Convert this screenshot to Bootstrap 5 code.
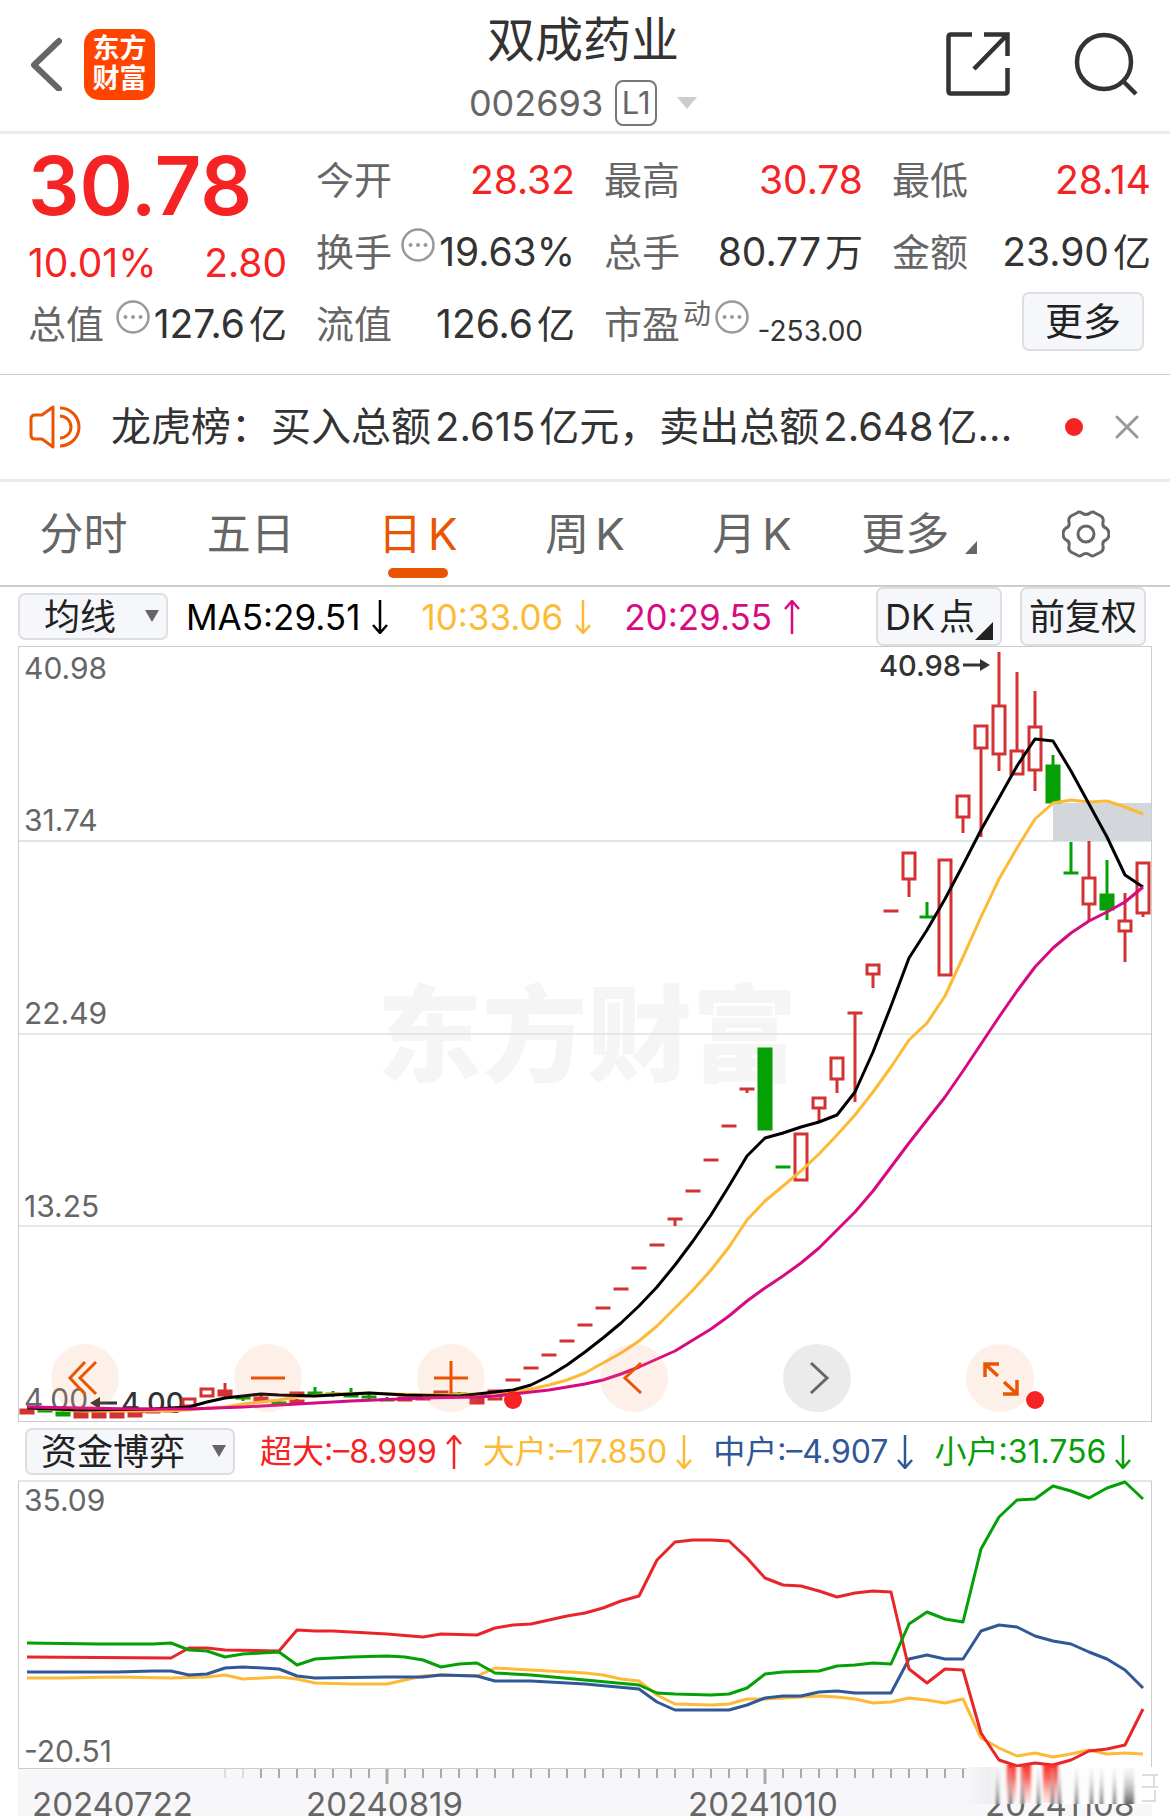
<!DOCTYPE html>
<html lang="zh-CN">
<head>
<meta charset="utf-8">
<meta name="viewport" content="width=device-width, initial-scale=1">
<title>双成药业 002693</title>
<link href="https://cdn.jsdelivr.net/npm/bootstrap@5.3.0/dist/css/bootstrap.min.css" rel="stylesheet">
<style>
body{font-family:Inter,"Noto Sans CJK SC",sans-serif;color:#333;background:#fff;overflow-x:hidden}
button{font-family:inherit}
svg{display:block;flex:none}
.cj{margin-left:4px}
.up-red{color:#f52323}
.topbar{height:134px;border-bottom:3px solid #ebebeb;padding:0 32px 0 28px}
.side{flex:1 1 0;padding-bottom:3px}
.logo-tile{width:71px;height:71px;border-radius:15px;background:#ff4400;color:#fff;font-size:27px;line-height:30px;font-weight:700;margin-left:22px}
.title-block{padding-top:6px}
.stock-name{font-size:48px;line-height:56px;font-weight:400;margin:0 0 12px}
.stock-code{font-size:36px;line-height:44px;color:#666;gap:12px}
.level-tag{border:2px solid #777;border-radius:8px;font-size:31px;line-height:42px;width:42px;text-align:center}
.quote{padding:10px 19px 14px 28px;gap:29px;border-bottom:1px solid #ccc;font-size:39px}
.quote-col{flex:1 1 0;min-width:0}
.pair{height:72px;white-space:nowrap}
.pair dt{font-weight:400;font-size:38px;color:#666}
.pair dd{margin:0}
.pair dd .cj{font-size:38px}
.big-price{font-size:81px;line-height:84px;font-weight:600}
.change{height:60px;padding-top:10px;font-size:39px}
.pe-sup{font-size:28px;margin:0 4px 20px 3px}
.pair .pe-val{font-size:28px;padding-top:14px}
.info-ring{margin-bottom:14px}
.flat-btn{background:#f6f7fa;border:2px solid #dcdee2;border-radius:7px;color:#222;padding:0;font-size:36px;line-height:42px}
.more-btn{width:122px;height:59px;font-size:38px;margin:0 7px 6px 0}
.newsbar{height:107px;border-bottom:3px solid #ebebeb;padding:0 31px 0 29px;font-size:40px}
.newsbar a{color:#333;margin-left:30px;text-decoration:none;white-space:nowrap}
.news-dot{width:18px;height:18px;border-radius:50%;background:#f52323;margin-right:32px}
.periods{height:105px;border-bottom:2px solid #ccc}
.periods a,.periods button{flex:1 1 0;height:103px;font-size:44px;color:#666;text-decoration:none;position:relative;background:none;border:0;padding:0;white-space:nowrap}
.periods a.active{color:#ea5504}
.periods a.active::after{content:"";position:absolute;left:50%;bottom:7px;width:60px;height:10px;margin-left:-30px;border-radius:5px;background:#ea5504}
.k-gap{margin-left:6px}
.legend-row{height:59px;padding:0 24px 0 18px;white-space:nowrap}
.legend-ma{font-size:35px;line-height:40px}
.legend-ma .trend{margin-left:12px}
.legend-ma .ma-item{margin-left:33px}
.legend-ma .picker+.ma-item{margin-left:18px}
.legend-fund{font-size:32px;line-height:40px;gap:21px;padding-left:25px}
.legend-fund .trend{margin-left:9px}
.picker{position:relative}
.picker select{appearance:none;background:#f6f7fa;border:2px solid #dcdee2;border-radius:7px;height:47px;line-height:42px;font-size:36px;color:#222;padding:0 0 0 24px;width:150px;font-family:inherit}
.picker.fund{margin-right:4px}
.picker.fund select{width:210px;padding-left:14px}
.picker::after{content:"";position:absolute;right:9px;top:17px;border:7px solid transparent;border-top:12px solid #666;border-bottom:0;pointer-events:none}
.tool-btn{height:59px;width:126px}
.tool-btn+.tool-btn{margin-left:18px}
.dk{position:relative;padding-right:18px}
.dk::after{content:"";position:absolute;right:7px;bottom:4px;border-left:18px solid transparent;border-bottom:18px solid #222}
.plot{margin:0 18px;position:relative}
.plot>svg{width:100%;height:auto;overflow:visible}
.plot text{font-family:Inter,"Noto Sans CJK SC",sans-serif}
.chart-tools{position:absolute;left:33px;right:118px;bottom:10px}
.chart-tools button{width:68px;height:68px;border:0;border-radius:50%;padding:0;background:rgba(242,142,88,.13)}
.chart-tools button.off{background:#ebebeb}
</style>
<script src="https://cdn.jsdelivr.net/npm/bootstrap@5.3.0/dist/js/bootstrap.bundle.min.js"></script>
</head>
<body>
<header class="topbar d-flex align-items-center">
  <div class="side d-flex align-items-center">
    <a href="#" aria-label="返回"><svg width="34" height="54" viewBox="0 0 34 54" fill="none" stroke="#666" stroke-width="6" stroke-linecap="round" stroke-linejoin="round"><path d="M31 4 6 28 31 52"/></svg></a>
    <div class="logo-tile d-flex flex-column align-items-center justify-content-center"><span>东方</span><span>财富</span></div>
  </div>
  <div class="title-block text-center">
    <h1 class="stock-name">双成药业</h1>
    <div class="stock-code d-flex align-items-center">002693<span class="level-tag">L1</span><svg width="20" height="12" viewBox="0 0 20 12" class="ms-2"><path d="M0 0H20L10 12Z" fill="#ccc"/></svg></div>
  </div>
  <div class="side d-flex align-items-center justify-content-end gap-5">
    <a href="#" aria-label="分享" class="me-3"><svg width="64" height="64" viewBox="0 0 64 64" fill="none" stroke="#333" stroke-width="4.5"><path d="M26 2.500H5Q2.500 2.500 2.500 5V59Q2.500 61.500 5 61.500H59Q61.500 61.500 61.500 59V36M38 2.500H61.500V24M61 3 28 37"/></svg></a>
    <a href="#" aria-label="搜索"><svg width="64" height="64" viewBox="0 0 64 64" fill="none" stroke="#333" stroke-width="4.500"><circle cx="30" cy="30" r="27"/><path d="M48 48 62 62"/></svg></a>
  </div>
</header>

<section class="quote d-flex">
  <div class="quote-col">
    <div class="big-price up-red">30.78</div>
    <div class="change up-red d-flex align-items-center justify-content-between"><span>10.01%</span><span>2.80</span></div>
    <dl class="pair d-flex align-items-center justify-content-between mb-0"><dt>总值</dt><dd class="d-flex align-items-center"><svg class="info-ring me-1" width="34" height="34"><use href="#ring"/></svg>127.6<span class="cj">亿</span></dd></dl>
  </div>
  <dl class="quote-col mb-0">
    <div class="pair d-flex align-items-center justify-content-between"><dt>今开</dt><dd class="up-red">28.32</dd></div>
    <div class="pair d-flex align-items-center justify-content-between"><dt>换手</dt><dd class="d-flex align-items-center"><svg class="info-ring me-1" width="34" height="34"><use href="#ring"/></svg>19.63%</dd></div>
    <div class="pair d-flex align-items-center justify-content-between"><dt>流值</dt><dd>126.6<span class="cj">亿</span></dd></div>
  </dl>
  <dl class="quote-col mb-0">
    <div class="pair d-flex align-items-center justify-content-between"><dt>最高</dt><dd class="up-red">30.78</dd></div>
    <div class="pair d-flex align-items-center justify-content-between"><dt>总手</dt><dd>80.77<span class="cj">万</span></dd></div>
    <div class="pair d-flex align-items-center justify-content-between"><dt class="d-flex align-items-center">市盈<span class="pe-sup">动</span><svg class="info-ring" width="34" height="34"><use href="#ring"/></svg></dt><dd class="pe-val">-253.00</dd></div>
  </dl>
  <div class="quote-col">
    <dl class="mb-0">
      <div class="pair d-flex align-items-center justify-content-between"><dt>最低</dt><dd class="up-red">28.14</dd></div>
      <div class="pair d-flex align-items-center justify-content-between"><dt>金额</dt><dd>23.90<span class="cj">亿</span></dd></div>
    </dl>
    <div class="pair d-flex align-items-center justify-content-end"><button type="button" class="flat-btn more-btn">更多</button></div>
  </div>
</section>

<section class="newsbar d-flex align-items-center">
  <svg width="52" height="44" viewBox="0 0 52 44" fill="none" stroke="#ea5504" stroke-width="3" stroke-linejoin="round"><path d="M24 2V42L13 34H6Q2 34 2 30V14Q2 10 6 10H13Z"/><path d="M31 11A11 11 0 0 1 31 33M31 3A19 19 0 0 1 31 41"/></svg>
  <a href="#">龙虎榜：买入总额<span class="cj">2.615</span><span class="cj">亿元，卖出总额</span><span class="cj">2.648</span><span class="cj">亿...</span></a>
  <span class="news-dot ms-auto"></span>
  <button type="button" class="border-0 bg-transparent p-0" aria-label="关闭"><svg width="24" height="24" viewBox="0 0 24 24" stroke="#999" stroke-width="3" stroke-linecap="round"><path d="M2 2 22 22M22 2 2 22"/></svg></button>
</section>

<nav class="periods d-flex">
  <a href="#" class="d-flex align-items-center justify-content-center">分时</a>
  <a href="#" class="d-flex align-items-center justify-content-center">五日</a>
  <a href="#" class="active d-flex align-items-center justify-content-center">日<span class="k-gap">K</span></a>
  <a href="#" class="d-flex align-items-center justify-content-center">周<span class="k-gap">K</span></a>
  <a href="#" class="d-flex align-items-center justify-content-center">月<span class="k-gap">K</span></a>
  <a href="#" class="d-flex align-items-center justify-content-center">更多<svg class="ms-3 mt-4" width="12" height="16"><path d="M12 3V16H0Z" fill="#666"/></svg></a>
  <button type="button" class="d-flex align-items-center justify-content-center" aria-label="设置"><svg width="48" height="48" viewBox="0 0 48 48" fill="none" stroke="#666" stroke-width="3" stroke-linejoin="round"><circle cx="24" cy="24" r="8"/><path d="M15 3Q17 1 20 3Q24 6 28 3Q31 1 33 3L39 6Q42 8 41 12Q40 17 44 18Q47 20 47 24Q47 28 44 30Q40 31 41 36Q42 40 39 42L33 45Q31 47 28 45Q24 42 20 45Q17 47 15 45L9 42Q6 40 7 36Q8 31 4 30Q1 28 1 24Q1 20 4 18Q8 17 7 12Q6 8 9 6Z"/></svg></button>
</nav>

<div class="legend-row legend-ma d-flex align-items-center">
  <label class="picker"><select aria-label="主图指标"><option>均线</option></select></label>
  <span class="ma-item d-flex align-items-center" style="color:#000">MA5:29.51<svg class="trend"><use href="#down"/></svg></span>
  <span class="ma-item d-flex align-items-center" style="color:#fdba36">10:33.06<svg class="trend"><use href="#down"/></svg></span>
  <span class="ma-item d-flex align-items-center" style="color:#d80a82">20:29.55<svg class="trend"><use href="#up"/></svg></span>
  <button type="button" class="flat-btn tool-btn dk ms-auto">DK<span class="cj">点</span></button>
  <button type="button" class="flat-btn tool-btn">前复权</button>
</div>

<div class="plot">
  <svg id="kline" viewBox="18 646 1134 776" role="img" aria-label="日K线"></svg>
  <div class="chart-tools d-flex justify-content-between">
    <button type="button" aria-label="更早"><svg width="68" height="68" fill="none" stroke="#ea5504" stroke-width="3"><path d="M34 18 19 34 34 50M45 18 29 34 45 50"/></svg></button>
    <button type="button" aria-label="缩小"><svg width="68" height="68" stroke="#ea5504" stroke-width="3"><path d="M17 34H51"/></svg></button>
    <button type="button" aria-label="放大"><svg width="68" height="68" stroke="#ea5504" stroke-width="3"><path d="M17 34H51M34 17V51"/></svg></button>
    <button type="button" aria-label="左移"><svg width="68" height="68" fill="none" stroke="#ea5504" stroke-width="3"><path d="M41 19 25 34 41 49"/></svg></button>
    <button type="button" class="off" aria-label="右移"><svg width="68" height="68" fill="none" stroke="#666" stroke-width="3"><path d="M28 19 44 34 28 49"/></svg></button>
    <button type="button" aria-label="全屏"><svg width="68" height="68" fill="none" stroke="#ea5504" stroke-width="3.500"><path d="M19 33V20H33M20 21 32 32M51 36V50H37M50 49 38 38"/></svg></button>
  </div>
</div>

<div class="legend-row legend-fund d-flex align-items-center">
  <label class="picker fund"><select aria-label="副图指标"><option>资金博弈</option></select></label>
  <span class="d-flex align-items-center" style="color:#f52323">超大:–8.999<svg class="trend"><use href="#up"/></svg></span>
  <span class="d-flex align-items-center" style="color:#fdba36">大户:–17.850<svg class="trend"><use href="#down"/></svg></span>
  <span class="d-flex align-items-center" style="color:#305796">中户:–4.907<svg class="trend"><use href="#down"/></svg></span>
  <span class="d-flex align-items-center" style="color:#0a9d0a">小户:31.756<svg class="trend"><use href="#down"/></svg></span>
</div>

<div class="plot">
  <svg id="fund" viewBox="18 1481 1134 335" role="img" aria-label="资金博弈"></svg>
</div>

<svg width="0" height="0" class="position-absolute">
  <defs>
    <symbol id="ring" viewBox="0 0 34 34"><circle cx="17" cy="17" r="15.500" fill="none" stroke="#999" stroke-width="2.500"/><g fill="#999"><circle cx="9.500" cy="17" r="2"/><circle cx="17" cy="17" r="2"/><circle cx="24.500" cy="17" r="2"/></g></symbol>
    <symbol id="down" viewBox="0 0 16 34"><path d="M8 0V33M1 25 8 33 15 25" fill="none" stroke="currentColor" stroke-width="2.500"/></symbol>
    <symbol id="up" viewBox="0 0 16 34"><path d="M8 34V1M1 9 8 1 15 9" fill="none" stroke="currentColor" stroke-width="2.500"/></symbol>
  </defs>
</svg>

<script>
document.querySelectorAll('svg.trend').forEach(function(s){s.setAttribute('width',16);s.setAttribute('height',34)});
var STEP=18, X0=27, RED='#d23232', GREEN='#05a005';
function cx(i){return X0+i*STEP}
// [day index, y, day index, y, ...]; each point is one trading day
function line(p,color,w){
  var s='';
  for(var i=0;i<p.length;i+=2)s+=cx(p[i])+','+p[i+1]+' ';
  return '<polyline points="'+s+'" fill="none" stroke="'+color+'" stroke-width="'+(w||3)+'" stroke-linejoin="round"/>';
}
// [day, kind, body top, body bottom, wick top, wick bottom]; r hollow red, R solid red, g solid green
var candles=[
[0,'R',1409,1414],[1,'g',1410,1412],[2,'g',1412,1416,1410,1416],[3,'R',1412,1418],[4,'R',1412,1418],[5,'R',1412,1418],[6,'R',1412,1417],[7,'R',1409,1413],[8,'R',1408,1412],
[9,'r',1398,1407],[10,'r',1388,1397],[11,'R',1390,1396,1383,1397],[12,'g',1397,1399,1396,1401],[13,'R',1397,1401,1395,1401],[14,'g',1402,1404,1399,1405],[15,'R',1392,1396],[15,'R',1400,1403,1399,1405],
[16,'g',1392,1395,1387,1395],[17,'g',1393,1395,1391,1397],[18,'g',1395,1397,1388,1397],[19,'g',1396,1398,1395,1400],[20,'g',1399,1401,1397,1401],[21,'R',1397,1401],[22,'R',1397,1400],[23,'R',1391,1394],[24,'g',1393,1395,1392,1396],[25,'R',1398,1404],[26,'r',1390,1400],
[27,'R',1379,1381],[28,'R',1367,1369],[29,'R',1354,1356],[30,'R',1340,1342],[31,'R',1324,1326],[32,'R',1307,1309],[33,'R',1288,1290],[34,'R',1267,1269],[35,'R',1244,1246],[36,'R',1218,1220,1218,1226],[37,'R',1190,1192],[38,'R',1159,1161],[39,'R',1125,1127],[40,'R',1088,1090,1088,1093],
[41,'g',1048,1130],[42,'g',1166,1168],[43,'r',1133,1181],[44,'r',1097,1109,1109,1122],[45,'r',1057,1080,1080,1093],[46,'R',1012,1014,1012,1102],[47,'r',964,975,975,988],[48,'R',910,912],[49,'r',852,880,880,897],[50,'g',916,918,902,918],[51,'r',859,976],[52,'r',795,818,818,833],[53,'r',725,749,749,837],[54,'r',705,755,652,771],[55,'r',750,775,672,750],[56,'r',726,771,691,791],[57,'g',765,803,755,803],[58,'g',872,874,842,874],[59,'r',877,905,841,921],[60,'g',894,910,860,920],[61,'r',920,932,893,962],[62,'r',862,914,914,917]];
function candle(c){
  var x=cx(c[0]),col=c[1]==='g'?GREEN:RED,s='';
  if(c[1]==='r'){
    if(c[4]){ if(c[4]<c[2])s+='M'+x+' '+c[4]+'V'+c[2]; if(c[5]>c[3])s+='M'+x+' '+c[3]+'V'+c[5]; }
    return '<path d="'+s+'M'+(x-6)+' '+(c[2]+1)+'H'+(x+6)+'V'+(c[3]-1)+'H'+(x-6)+'Z" fill="none" stroke="'+col+'" stroke-width="3"/>';
  }
  s='<rect x="'+(x-7.5)+'" y="'+(c[2]-.5)+'" width="15" height="'+(c[3]-c[2]+1)+'" fill="'+col+'"/>';
  if(c[4])s+='<path d="M'+x+' '+c[4]+'V'+c[5]+'" stroke="'+col+'" stroke-width="3"/>';
  return s;
}
function label(x,y,t,extra){return '<text x="'+x+'" y="'+y+'" font-size="30" fill="#666" '+(extra||'')+'>'+t+'</text>'}
var k='<text x="587" y="1073" text-anchor="middle" font-size="105" font-weight="900" fill="#f5f5f5">东方财富</text>';
k+='<path d="M18 1034H1152M18 1226H1152" stroke="#e6e7e9" stroke-width="2"/><path d="M18 841H1152" stroke="#dfe3ea" stroke-width="2"/>';
k+='<rect x="1053" y="803" width="99" height="38" fill="#d3d7dc"/>';
k+='<rect x="18.500" y="646.500" width="1133" height="775" fill="none" stroke="#ccc"/>';
k+=label(24,679,'40.98')+label(24,831,'31.74')+label(24,1024,'22.49')+label(24,1217,'13.25')+label(24,1410,'4.00');
k+=label(121,1413,'4.00','font-weight="500" style="fill:#333;font-size:29px"')+label(879,676,'40.98','font-weight="500" style="fill:#333;font-size:29px"');
k+='<path d="M99 1403H117M963 665H982" stroke="#333" stroke-width="3"/><path d="M90 1403 100 1397V1409ZM990 665 980 659V671Z" fill="#333"/>';
k+=candles.map(candle).join('');
k+=line([0,1408,3,1411,8,1411,11,1407,12,1404,13,1402,14,1400,15,1397,17,1394,19,1393,22,1395,25,1394,27,1392,28,1389,29,1385,30,1380,31,1373,32,1363,33,1353,34,1341,35,1326,36,1308,37,1290,38,1270,39,1247,40,1220,41,1201,42,1186,43,1171,44,1154,45,1135,46,1115,47,1092,48,1067,49,1040,50,1023,51,996,52,957,53,917,54,879,55,848,56,819,57,803,58,800,59,802,60,801,61,807,62,814],'#fdba36');
k+=line([0,1408,3,1410,7,1409,9,1407,10,1402,11,1398,12,1396,13,1394,14,1395,16,1396,17,1395,19,1393,21,1395,24,1396,26,1392,27,1390,28,1385,29,1376,30,1365,31,1352,32,1338,33,1323,34,1306,35,1287,36,1265,37,1241,38,1215,39,1186,40,1156,41,1138,42,1133,43,1127,44,1122,45,1115,46,1092,47,1052,48,1006,49,958,50,930,51,899,52,865,53,830,54,798,55,766,56,739,57,741,58,771,59,804,60,837,61,875,62,887],'#000');
k+=line([0,1407,3,1408,6,1409,9,1409,12,1407,15,1404,18,1401,22,1398,25,1397,26,1396,27,1394,28,1392,29,1390,30,1387,31,1384,32,1380,33,1374,34,1367,35,1359,36,1351,37,1340,38,1329,39,1316,40,1301,41,1288,42,1276,43,1263,44,1248,45,1230,46,1212,47,1191,48,1167,49,1143,50,1120,51,1097,52,1071,53,1044,54,1017,55,991,56,967,57,948,58,933,59,921,60,912,61,902,62,887],'#d80a82');
k+='<circle cx="513" cy="1400" r="9" fill="#f52323"/><circle cx="1035" cy="1400" r="9" fill="#f52323"/>';
document.getElementById('kline').innerHTML=k;

var f='<rect x="18" y="1769" width="1134" height="47" fill="#f7f7fa"/><rect x="18.500" y="1481" width="1133" height="287.500" fill="none" stroke="#ccc"/>';
for(var i=11;i<=52;i++){
  var big=(i===20||i===41);
  f+='<path d="M'+cx(i)+' 1769V'+(big?1784:1778)+'" stroke="'+(i<13?'#ddd':'#aaa')+'" stroke-width="'+(big?3:2)+'"/>';
}
f+=label(24,1511,'35.09')+label(24,1762,'-20.51');
[[32,'20240722'],[306,'20240819'],[688,'20241010'],[985,'20241108']].forEach(function(d){f+='<text x="'+d[0]+'" y="1816" font-size="33" fill="#666">'+d[1]+'</text>'});
f+=line([0,1678,2,1678,5,1677,8,1678,10,1677,11,1675,12,1679,14,1677,15,1679,16,1683,18,1684,20,1684,21,1680,22,1676,23,1675,25,1676,26,1668,28,1670,31,1673,32,1675,33,1679,34,1681,35,1695,36,1704,38,1705,39,1704,40,1699,41,1699,44,1696,45,1697,46,1699,47,1703,48,1702,49,1698,50,1700,51,1703,52,1699,53,1738,54,1748,55,1756,56,1753,57,1757,58,1754,59,1750,60,1754,61,1753,62,1754],'#fdba36');
f+=line([0,1672,5,1672,7,1671,8,1671,9,1675,10,1674,11,1668,12,1667,14,1669,15,1676,16,1678,20,1677,22,1677,23,1675,25,1676,26,1681,28,1681,31,1684,34,1689,35,1702,36,1710,38,1710,39,1710,40,1705,41,1698,42,1696,43,1696,44,1692,45,1691,46,1693,48,1693,49,1659,50,1655,51,1659,52,1659,53,1631,54,1625,55,1627,56,1636,57,1641,58,1644,59,1652,60,1659,61,1670,62,1688],'#305796');
f+=line([0,1657,8,1658,9,1648,10,1648,11,1650,14,1651,15,1630,16,1631,17,1631,20,1634,22,1637,23,1634,25,1635,26,1628,27,1625,28,1624,29,1620,30,1616,31,1613,32,1608,33,1601,34,1596,35,1560,36,1542,37,1540,38,1540,39,1541,40,1558,41,1578,42,1585,43,1586,44,1591,45,1597,46,1593,47,1591,48,1592,49,1669,50,1683,51,1669,52,1670,53,1733,54,1760,55,1766,56,1763,57,1765,58,1760,59,1751,60,1749,61,1745,62,1709],'#e8262a');
f+=line([0,1643,4,1644,7,1644,8,1643,9,1650,10,1651,11,1657,12,1654,13,1653,14,1652,15,1665,16,1659,17,1658,18,1657,20,1656,21,1657,22,1660,23,1667,24,1664,25,1663,26,1673,28,1675,31,1680,34,1685,35,1693,36,1694,38,1695,39,1694,40,1688,41,1674,42,1672,44,1671,45,1666,46,1665,47,1663,48,1664,49,1624,50,1612,51,1619,52,1622,53,1549,54,1517,55,1500,56,1499,57,1486,58,1491,59,1498,60,1488,61,1482,62,1499],'#05a005');
// vertical smear over the last date
f+='<defs><linearGradient id="veil"><stop offset="0" stop-color="#f7f7fa"/><stop offset=".12" stop-color="#eeeef0"/><stop offset=".22" stop-color="#fbfbfc"/><stop offset="1" stop-color="#fff"/></linearGradient>'+
 '<linearGradient id="fadeR" x1="0" y1="0" x2="0" y2="1"><stop offset="0" stop-color="#fa3028"/><stop offset=".35" stop-color="#fa4a40" stop-opacity=".85"/><stop offset="1" stop-color="#fbb" stop-opacity=".35"/></linearGradient>'+
 '<linearGradient id="fadeG" x1="0" y1="0" x2="0" y2="1"><stop offset="0" stop-color="#ddd" stop-opacity=".2"/><stop offset="1" stop-color="#666"/></linearGradient>'+
 '<filter id="soft" x="-50%" width="200%"><feGaussianBlur stdDeviation="1.500 0"/></filter></defs>';
f+='<rect x="966" y="1767" width="190" height="37" fill="url(#veil)"/>';
f+='<g filter="url(#soft)" fill="url(#fadeR)"><rect x="1007" y="1765" width="9" height="38"/><rect x="1021" y="1765" width="10" height="38"/><rect x="1043" y="1765" width="15" height="38"/></g>';
f+='<g filter="url(#soft)" fill="url(#fadeG)">'+[[996,3],[1009,3],[1021,3],[1037,3],[1051,3],[1058,3],[1075,3],[1090,3],[1100,3],[1113,3],[1124,10]].map(function(g){return '<rect x="'+g[0]+'" y="1768" width="'+g[1]+'" height="36"/>'}).join('')+'</g>';
f+='<path d="M1142 1775H1158M1142 1787H1158M1154 1775V1788M1142 1801H1155V1790" fill="none" stroke="#ddd" stroke-width="2"/>';
document.getElementById('fund').innerHTML=f;
</script>
</body>
</html>
